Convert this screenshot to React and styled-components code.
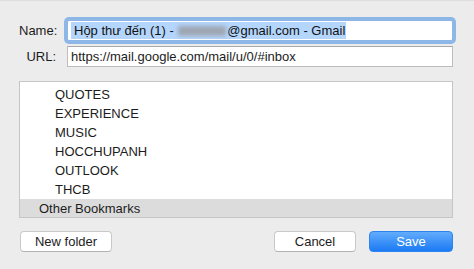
import styled, { createGlobalStyle } from "styled-components";

const Global = createGlobalStyle`
html, body {
  margin: 0;
  padding: 0;
  background: #ececec;
}
body {
  font-family: "Liberation Sans", Arial, sans-serif;
  font-size: 13px;
  color: #1c1c1c;
}
`

const Dialog = styled.div`
width: 474px;
height: 269px;
box-sizing: border-box;
background: #ececec;
border-top: 1px solid #dedede;
padding: 19px 21px 0 19px;
display: flex;
flex-direction: column;
overflow: hidden;
`

const Fields = styled.div`
display: grid;
grid-template-columns: 37px 1fr;
column-gap: 11px;
row-gap: 5px;
align-items: center;
`

const Label = styled.label`
text-align: right;
white-space: nowrap;
color: #1c1c1c;
`

const Field = styled.div`
height: 21px;
box-sizing: border-box;
border: 1px solid #bdbdbd;
border-top-color: #a9a9a9;
background: #fff;
display: flex;
align-items: center;
padding: 0 3px;
white-space: nowrap;
overflow: hidden;
${p => p.$focused && `
  border-color: #8fb6e6;
  border-radius: 2px;
  box-shadow: 0 0 0 3px rgba(110, 165, 230, 0.75);
`}
`

const Selected = styled.span`
background: #b4d6fd;
padding: 1px 1px 1px 3px;
color: #111;
`

const Redacted = styled.span`
display: inline-block;
width: 48px;
height: 10px;
margin: 0 1px;
vertical-align: -1px;
background: #9ea6b2;
filter: blur(2px);
`

const List = styled.div`
margin-top: 14px;
height: 137px;
box-sizing: border-box;
border: 1px solid #c6c6c6;
background: #fff;
padding-top: 3px;
overflow: hidden;
`

const Row = styled.div`
height: 19px;
line-height: 19px;
padding-left: ${p => (p.$depth ? 35 : 19)}px;
background: ${p => (p.$selected ? "#dcdcdc" : "transparent")};
color: #1c1c1c;
white-space: nowrap;
`

const Buttons = styled.div`
margin-top: 13px;
display: flex;
align-items: center;
`

const Spacer = styled.div`
flex: 1;
`

const Button = styled.button`
width: ${p => p.$w}px;
height: 21px;
box-sizing: border-box;
font-family: "Liberation Sans", Arial, sans-serif;
font-size: 13px;
color: #1c1c1c;
background: #fff;
border: 1px solid #c9c9c9;
border-bottom-color: #b3b3b3;
border-radius: 4px;
padding: 0;
margin-left: ${p => p.$ml || 0}px;
cursor: pointer;
`

const Primary = styled(Button)`
color: #fff;
border: 1px solid #2b84f0;
background: linear-gradient(#62acfc, #1c7af4);
`

const folders = ["QUOTES", "EXPERIENCE", "MUSIC", "HOCCHUPANH", "OUTLOOK", "THCB"]

const App = () => {
  return (
    <>
      <Global />
      <Dialog>
        <Fields>
          <Label>Name:</Label>
          <Field $focused>
            <Selected>
              Hộp thư đến (1) - <Redacted />@gmail.com - Gmail
            </Selected>
          </Field>
          <Label>URL:</Label>
          <Field>https://mail.google.com/mail/u/0/#inbox</Field>
        </Fields>

        <List>
          {folders.map(f => (
            <Row key={f} $depth={1}>{f}</Row>
          ))}
          <Row $selected>Other Bookmarks</Row>
        </List>

        <Buttons>
          <Button $w={92} $ml={1}>New folder</Button>
          <Spacer />
          <Button $w={82}>Cancel</Button>
          <Primary $w={84} $ml={13}>Save</Primary>
        </Buttons>
      </Dialog>
    </>
  )
}

export default App
